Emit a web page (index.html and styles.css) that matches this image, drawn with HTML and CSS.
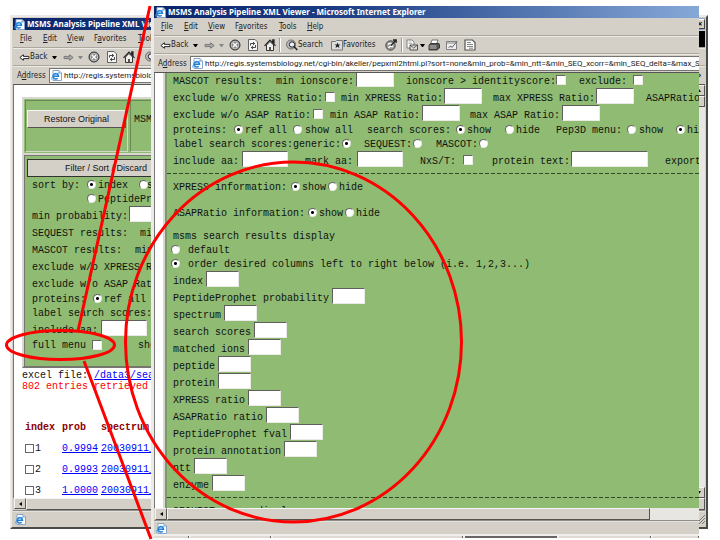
FILE: index.html
```html
<!DOCTYPE html>
<html lang="en">
<head>
<meta charset="utf-8">
<title>MSMS Analysis Pipeline XML Viewer</title>
<link rel="stylesheet" href="styles.css">
</head>
<body>
<svg class="defs" aria-hidden="true">
  <symbol id="ie" viewBox="0 0 11 11"><path d="M2 .5h6l2.500 2.500v7.500H2z" fill="#fff" stroke="#8aa4c8"/><path d="M8 .5V3h2.500" fill="#d8e6f8" stroke="#5b7cb0" stroke-width=".6"/><path d="M2.200 6.200h5.300a2.700 2.700 0 1 0-.8 2" fill="none" stroke="#1e7fd6" stroke-width="1.500"/><path d="M.6 9.500C0 7 4 3.200 8.300 3.200" fill="none" stroke="#3aa0ee" stroke-width=".8"/></symbol>
  <symbol id="back" viewBox="0 0 10 10"><path d="M4 2.500.8 5 4 7.500V6h5V4H4z" fill="#fff" stroke="#222" stroke-width=".9"/></symbol>
  <symbol id="fwd" viewBox="0 0 10 10"><path d="M6 2.500 9.200 5 6 7.500V6H1V4h5z" fill="#aaa" stroke="#777" stroke-width=".9"/></symbol>
  <symbol id="stop" viewBox="0 0 12 12"><circle cx="6" cy="6" r="5" fill="#8c8c8c" stroke="#333"/><circle cx="6" cy="6" r="3.700" fill="none" stroke="#ddd" stroke-width=".6"/><path d="m4 4 4 4m0-4L4 8" stroke="#fff" stroke-width="1.300"/></symbol>
  <symbol id="refresh" viewBox="0 0 12 12"><path d="M1.500.5h6.500l2.500 2.500v8.500h-9z" fill="#f5f5f5" stroke="#555" stroke-width=".9"/><path d="M3.500 6.500V4.500h4M6 3l1.700 1.500L6 6M8.500 6v2.500h-4M6 7 4.300 8.500 6 10" fill="none" stroke="#333" stroke-width=".9"/></symbol>
  <symbol id="home" viewBox="0 0 12 12"><path d="M2.500 6v5.500h7V6L6 2.500z" fill="#eee" stroke="#333"/><path d="M.5 6.800 6 1.200l5.500 5.600M8.800 3.500V.8H10v4" fill="none" stroke="#222" stroke-width="1.200"/><path d="M5 8h2v3.500H5z" fill="#555"/></symbol>
  <symbol id="search" viewBox="0 0 12 12"><circle cx="5" cy="5.500" r="4.500" fill="#bbb" stroke="#555" stroke-width=".8"/><circle cx="6" cy="5.500" r="2.700" fill="#eef" stroke="#222"/><path d="m8 7.500 3.300 3.500" stroke="#222" stroke-width="1.600"/></symbol>
  <symbol id="fav" viewBox="0 0 12 12"><path d="M.5 2.500h4l1-1h6v9.500H.5z" fill="#ddd" stroke="#777"/><path d="m6.500 3.500.8 2h2.200L7.800 6.800l.7 2.200-2-1.300-2 1.300.7-2.200-1.700-1.300h2.200z" fill="#222"/></symbol>
  <symbol id="history" viewBox="0 0 12 12"><circle cx="5.500" cy="6.500" r="4.700" fill="#999" stroke="#444"/><path d="M3 5.500c2-2 4-1 5 1M3.500 9c1-2 3-2 4.500-1" fill="none" stroke="#fff" stroke-width="1.200"/><path d="m6 6.500 5-5.500M8 1h3.200v3" fill="none" stroke="#222" stroke-width="1.300"/></symbol>
  <symbol id="mail" viewBox="0 0 12 12"><path d="M1 1h5l2 2v6H1z" fill="#fff" stroke="#666" stroke-width=".8"/><path d="M2.500 3h3M2.500 4.500h4" stroke="#999" stroke-width=".7"/><path d="M4 6h7.500v5H4z" fill="#ddd" stroke="#444" stroke-width=".9"/><path d="m4 6 3.700 3 3.800-3" fill="none" stroke="#444" stroke-width=".8"/></symbol>
  <symbol id="print" viewBox="0 0 12 12"><path d="M4 1h6L8.500 5h-6z" fill="#fff" stroke="#555" stroke-width=".8"/><path d="M1 6 3 4.500h8L11.500 6v3L9 11H1z" fill="#555" stroke="#222" stroke-width=".8"/><path d="M1.500 7h7M1.500 9h7" stroke="#ddd" stroke-width=".8"/></symbol>
  <symbol id="edit" viewBox="0 0 12 12"><path d="M.5 2.500h10v8H.5z" fill="#eee" stroke="#777" stroke-width=".9"/><path d="M1 4h9" stroke="#888"/><path d="M2.500 8.500 5 7l1 1.500L11.300 2" fill="none" stroke="#666"/></symbol>
  <symbol id="notes" viewBox="0 0 12 12"><path d="M1 1h7.500L11 3.500V11H1z" fill="#fafafa" stroke="#555" stroke-width="1.200"/><path d="M3 3.500h4M3 5.500h6M3 7.500h6M5 9.200h4" stroke="#777" stroke-width=".9"/></symbol>
</svg>
<main class="desktop">

<section class="window window-back" aria-label="Compact menu view">
  <header class="titlebar"><svg class="icon"><use href="#ie"/></svg><span>MSMS Analysis Pipeline XML Viewer</span><button class="close" aria-label="Close">×</button></header>
  <nav class="menubar"><button><u>F</u>ile</button><button><u>E</u>dit</button><button><u>V</u>iew</button><button>F<u>a</u>vorites</button><button><u>T</u>ools</button><i class="throbber"></i></nav>
  <div class="toolbar"><button class="tool"><svg class="icon"><use href="#back"/></svg>Back</button><i class="drop"></i><svg class="icon"><use href="#fwd"/></svg><i class="drop dim"></i><svg class="icon big"><use href="#stop"/></svg><svg class="icon big"><use href="#refresh"/></svg><svg class="icon big"><use href="#home"/></svg><i></i><svg class="icon big"><use href="#search"/></svg></div>
  <div class="address"><label for="url-back">A<u>d</u>dress</label><div class="urlbox"><svg class="icon"><use href="#ie"/></svg><input id="url-back" value="http://regis.systemsbiology.net"></div><span class="more">»</span></div>
  <div class="viewport">
    <div class="page">
      <div class="panel panel-back">
        <div class="panel-top"><div class="cell"><button class="push">Restore Original</button></div><div class="cell msms">MSMS</div></div>
        <form class="filter">
          <button type="button" class="push filter-button">Filter / Sort / Discard</button>
          <div class="row radios b-sort"><span>sort by:</span><input type="radio" name="sort" id="s1" checked><label for="s1">index</label><input type="radio" name="sort" id="s2"><label for="s2">spectrum</label></div>
          <div class="row radios b-pep"><input type="radio" name="sort" id="s3"><label for="s3">PeptideProphet</label></div>
          <div class="row b-prob"><label for="bp">min probability:</label><input type="text" id="bp"></div>
          <div class="row b-seq"><span>SEQUEST results:</span><span>min</span></div>
          <div class="row b-mas"><span>MASCOT results:</span><span>min</span></div>
          <div class="row"><span>exclude w/o XPRESS Ratio:</span></div>
          <div class="row"><span>exclude w/o ASAP Ratio:</span></div>
          <div class="row radios b-prot"><span>proteins:</span><input type="radio" name="bprot" id="b1" checked><label for="b1">ref all</label></div>
          <div class="row radios tall"><span>label search scores:</span></div>
          <div class="row b-aa"><label for="baa">include aa:</label><input type="text" id="baa"></div>
          <div class="row b-full"><label for="full">full menu</label><input type="checkbox" id="full"><span>show</span></div>
        </form>
      </div>
      <p class="note">excel file: <a href="#x">/data3/search</a></p>
      <p class="note red">802 entries retrieved from</p>
      <table class="results">
        <thead><tr><th class="c-index">index</th><th class="c-prob">prob</th><th>spectrum</th></tr></thead>
        <tbody>
          <tr><td><label><input type="checkbox">1</label></td><td><a href="#a">0.9994</a></td><td><a href="#b">20030911_</a></td></tr>
          <tr><td><label><input type="checkbox">2</label></td><td><a href="#a">0.9993</a></td><td><a href="#b">20030911_</a></td></tr>
          <tr><td><label><input type="checkbox">3</label></td><td><a href="#a">1.0000</a></td><td><a href="#b">20030911_</a></td></tr>
        </tbody>
      </table>
    </div>
    <div class="vscroll"><i class="sbtn up"></i><i class="sbtn"></i><i class="track"></i><i class="sbtn down"></i></div>
  </div>
  <div class="hscroll"><i class="sbtn left"></i><i class="thumb"></i></div>
  <footer class="status"><svg class="icon"><use href="#ie"/></svg><svg class="grip" viewBox="0 0 9 9"><path d="M0 9 9 0M3 9l6-6M6 9l3-3" stroke="#777"/></svg></footer>
</section>

<section class="window window-front" aria-label="Full menu view">
  <header class="titlebar"><svg class="icon"><use href="#ie"/></svg><span>MSMS Analysis Pipeline XML Viewer - Microsoft Internet Explorer</span></header>
  <nav class="menubar"><button><u>F</u>ile</button><button><u>E</u>dit</button><button><u>V</u>iew</button><button>F<u>a</u>vorites</button><button><u>T</u>ools</button><button><u>H</u>elp</button></nav>
  <div class="toolbar"><button class="tool"><svg class="icon"><use href="#back"/></svg>Back</button><i class="drop"></i><svg class="icon"><use href="#fwd"/></svg><i class="drop dim"></i><svg class="icon big"><use href="#stop"/></svg><svg class="icon big"><use href="#refresh"/></svg><svg class="icon big"><use href="#home"/></svg><i class="sep"></i><button class="tool"><svg class="icon big"><use href="#search"/></svg>Search</button><button class="tool"><svg class="icon big"><use href="#fav"/></svg>Favorites</button><svg class="icon big"><use href="#history"/></svg><i class="sep"></i><svg class="icon big"><use href="#mail"/></svg><i class="drop"></i><svg class="icon big"><use href="#print"/></svg><svg class="icon big"><use href="#edit"/></svg><svg class="icon big"><use href="#notes"/></svg></div>
  <div class="address"><label for="url-front">A<u>d</u>dress</label><div class="urlbox"><svg class="icon"><use href="#ie"/></svg><input id="url-front" value="http://regis.systemsbiology.net/cgi-bin/akeller/pepxml2html.pl?sort=none&amp;min_prob=&amp;min_ntt=&amp;min_SEQ_xcorr=&amp;min_SEQ_delta=&amp;max_SEQ"></div></div>
  <div class="viewport">
    <form class="panel panel-front">
      <div class="row r1"><span>MASCOT results:</span><label for="f1">min ionscore:</label><input type="text" id="f1"><label for="f2">ionscore &gt; identityscore:</label><input type="checkbox" id="f2"><label for="f3">exclude:</label><input type="checkbox" id="f3"></div>
      <div class="row r2"><label for="f4">exclude w/o XPRESS Ratio:</label><input type="checkbox" id="f4"><label for="f5">min XPRESS Ratio:</label><input type="text" id="f5"><label for="f6">max XPRESS Ratio:</label><input type="text" id="f6"><span>ASAPRatio</span></div>
      <div class="row r3"><label for="f7">exclude w/o ASAP Ratio:</label><input type="checkbox" id="f7"><label for="f8">min ASAP Ratio:</label><input type="text" id="f8"><label for="f9">max ASAP Ratio:</label><input type="text" id="f9"></div>
      <div class="row radios r4"><span>proteins:</span><input type="radio" name="prot" id="p1" checked><label for="p1">ref all</label><input type="radio" name="prot" id="p2"><label for="p2">show all</label><span>search scores:</span><input type="radio" name="sc" id="p3" checked><label for="p3">show</label><input type="radio" name="sc" id="p4"><label for="p4">hide</label><span>Pep3D menu:</span><input type="radio" name="pep" id="p5"><label for="p5">show</label><input type="radio" name="pep" id="p6" checked><label for="p6">hide</label></div>
      <div class="row radios tall r5"><span>label search scores:</span><label for="g1">generic:</label><input type="radio" name="lab" id="g1" checked><label for="g2">SEQUEST:</label><input type="radio" name="lab" id="g2"><label for="g3">MASCOT:</label><input type="radio" name="lab" id="g3"></div>
      <div class="row r6"><label for="h1">include aa:</label><input type="text" id="h1"><label for="h2">mark aa:</label><input type="text" id="h2"><label for="h3">NxS/T:</label><input type="checkbox" id="h3"><label for="h4">protein text:</label><input type="text" id="h4"><span>export</span></div>
      <hr>
      <div class="row radios info info-x"><span>XPRESS information:</span><input type="radio" name="xi" id="x1" checked><label for="x1">show</label><input type="radio" name="xi" id="x2"><label for="x2">hide</label></div>
      <div class="row radios info info-a"><span>ASAPRatio information:</span><input type="radio" name="ai" id="a1" checked><label for="a1">show</label><input type="radio" name="ai" id="a2"><label for="a2">hide</label></div>
      <div class="row radios"><span>msms search results display</span></div>
      <div class="row radios choice"><input type="radio" name="disp" id="d1"><label for="d1">default</label></div>
      <div class="row radios choice tall"><input type="radio" name="disp" id="d2" checked><label for="d2">order desired columns left to right below (i.e. 1,2,3...)</label></div>
      <div class="row field"><label for="o1">index</label><input type="text" id="o1"></div>
      <div class="row field"><label for="o2">PeptideProphet probability</label><input type="text" id="o2"></div>
      <div class="row field"><label for="o3">spectrum</label><input type="text" id="o3"></div>
      <div class="row field"><label for="o4">search scores</label><input type="text" id="o4"></div>
      <div class="row field"><label for="o5">matched ions</label><input type="text" id="o5"></div>
      <div class="row field"><label for="o6">peptide</label><input type="text" id="o6"></div>
      <div class="row field"><label for="o7">protein</label><input type="text" id="o7"></div>
      <div class="row field"><label for="o8">XPRESS ratio</label><input type="text" id="o8"></div>
      <div class="row field"><label for="o9">ASAPRatio ratio</label><input type="text" id="o9"></div>
      <div class="row field"><label for="o10">PeptideProphet fval</label><input type="text" id="o10"></div>
      <div class="row field"><label for="o11">protein annotation</label><input type="text" id="o11"></div>
      <div class="row field"><label for="o12">ntt</label><input type="text" id="o12"></div>
      <div class="row field"><label for="o13">enzyme</label><input type="text" id="o13"></div>
      <hr>
      <div class="row radios"><span>SEQUEST score display</span></div>
    </form>
  </div>
  <div class="hscroll"><i class="sbtn left"></i><i class="thumb"></i><i class="track"></i></div>
  <footer class="status"><svg class="icon"><use href="#ie"/></svg></footer>
  <div class="taskbar"><i></i><i></i><i></i><i class="active"></i><i></i><i></i></div>
</section>

<svg class="callout" viewBox="0 0 720 540" preserveAspectRatio="none" aria-hidden="true">
  <ellipse cx="293.500" cy="342" rx="168" ry="180"/>
  <ellipse cx="60.500" cy="345" rx="54" ry="14.500"/>
  <path d="M150 6 78 331M84 361l67 178"/>
</svg>
</main>
</body>
</html>
```
FILE: styles.css
```css
* { box-sizing: border-box; }

:root {
  --face: #d4d0c8;
  --light: #eceae6;
  --shadow: #77756f;
  --green: #8fbc72;
}

html, body { height: 100%; margin: 0; }
body { background: #fff; overflow: hidden; }
.defs { position: absolute; width: 0; height: 0; }
.desktop { position: relative; height: 100%; }

button, input { font: inherit; color: inherit; margin: 0; padding: 0; }
button { border: 0; background: none; }

.window {
  position: absolute;
  display: flex;
  flex-direction: column;
  background: var(--face);
  font: 8px/12px "DejaVu Sans Condensed", "DejaVu Sans", sans-serif;
  color: #222;
  overflow: hidden;
}
.window-back {
  left: 10px; right: 12px; top: 15px; bottom: 11px;
  border: 2px solid var(--light);
  border-right-color: #4a4a48;
  border-bottom-color: #4a4a48;
  box-shadow: inset 1px 1px 0 var(--face);
  padding: 1px;
}
.window-front {
  left: 151px; right: 21px; top: 6px; bottom: 2px;
  border-left: 3px solid var(--light);
}

.icon { width: 11px; height: 11px; flex: none; display: block; }
.icon.big { width: 12px; height: 12px; }

.titlebar {
  display: flex;
  align-items: center;
  gap: 2px;
  height: 12px;
  flex: none;
  padding-left: 1px;
  background: linear-gradient(90deg, #0a246a, #1d3f85 35%, #86a8d8);
  color: #fff;
  font-family: "Noto Sans", sans-serif;
  font-weight: bold;
  white-space: nowrap;
}
.close {
  margin-left: auto;
  width: 10px; height: 10px;
  line-height: 8px;
  background: var(--face);
  color: #000;
  border: 1px solid #fff;
  border-right-color: #444; border-bottom-color: #444;
}

.menubar {
  display: grid;
  grid-template-columns: 23px 24px 27px 44px 28px 1fr;
  align-items: center;
  height: 18px;
  flex: none;
  padding-left: 7px;
  border-bottom: 1px solid #aaa79f;
}
.menubar button { text-align: left; }
.throbber { justify-self: end; width: 16px; height: 16px; background: #000; }

.toolbar {
  display: grid;
  grid-template-columns: 33px 11px 15px 10px 18px 17px 15px 7px 45px 54px 16px 5px 14px 8px 18px 18px 14px;
  align-items: center;
  height: 18px;
  flex: none;
  padding-left: 6px;
  border-top: 1px solid var(--light);
  border-bottom: 1px solid #aaa79f;
}
.tool { display: flex; align-items: center; white-space: nowrap; }
.drop { border: 2px solid transparent; border-top: 3px solid #000; border-bottom: 0; width: 5px; }
.drop.dim { border-top-color: #888; }
.sep { width: 2px; height: 14px; border-left: 1px solid #999; border-right: 1px solid #fff; }

.address { display: flex; align-items: center; height: 18px; flex: none; padding-left: 4px; border-top: 1px solid var(--light); }
.address label { width: 32px; flex: none; }
.urlbox {
  display: flex;
  align-items: center;
  gap: 2px;
  flex: 1;
  min-width: 0;
  height: 15px;
  padding-left: 1px;
  background: #fff;
  border: 1px solid var(--shadow);
  border-right: 0;
}
.urlbox input { flex: 1; min-width: 0; height: 12px; border: 0; background: none; outline: 0; font-family: Roboto, "Liberation Sans", sans-serif; }
.more { width: 12px; font-weight: bold; text-align: center; }

.viewport {
  display: flex;
  flex: 1;
  min-height: 0;
  background: #fff;
  border-top: 1px solid #555;
  border-left: 1px solid #777;
  overflow: hidden;
  font: 10px/20px "Liberation Mono", monospace;
  color: #111;
}
.page { flex: 1; min-width: 0; padding: 12px 0 0 8px; overflow: hidden; }

.panel { background: var(--green); }
.panel-front {
  flex: 1;
  min-width: 0;
  height: max-content;
  margin: -2px 0 0 8px;
  padding-left: 8px;
  border-left: 2px solid #d9d7d2;
  box-shadow: inset 2px 0 0 #7c9a68;
}
.panel-back { border: 2px solid #d9d7d2; border-right: 0; border-bottom-color: var(--shadow); }
.panel-top { display: grid; grid-template-columns: 105px 1fr; height: 56px; border-bottom: 2px solid #d9d7d2; }
.cell { border: 1px solid #6c8758; border-right-color: #cfd8c6; border-bottom-color: #cfd8c6; margin: 1px; padding: 9px 1px; }
.cell.msms { padding-left: 3px; }
.push {
  display: block;
  width: 100%;
  height: 18px;
  background: var(--face);
  border: 1px solid #f4f4f4;
  border-right-color: #55534e;
  border-bottom-color: #55534e;
  font: 9px/14px "Liberation Sans", sans-serif;
}
.filter { padding: 3px 0 12px 2px; border-top: 1px solid var(--shadow); border-left: 1px solid var(--shadow); }
.filter-button { border: 1px solid #333; text-align: left; padding-left: 37px; }
.filter .row { margin-left: 5px; }

/* A form line: children sit on the column grid that each line declares. */
.row { display: grid; align-items: start; justify-content: start; height: 17px; white-space: nowrap; line-height: 22px; }
.row.radios { height: 14px; line-height: 18px; }
.row.radios.tall { height: 15px; }

input[type="text"] {
  appearance: none;
  width: 38px;
  height: 16px;
  background: #fff;
  border: 1px solid var(--light);
  border-top-color: #5e5e5a;
  border-left-color: #5e5e5a;
  border-radius: 0;
  outline: 0;
}
input[type="checkbox"], input[type="radio"] {
  appearance: none;
  display: block;
  width: 9px;
  height: 9px;
  margin-top: 4px;
  background: #fff;
  border: 1px solid var(--light);
  border-top-color: #666;
  border-left-color: #666;
}
input[type="checkbox"] { width: 10px; height: 10px; }
input[type="radio"] { border-radius: 50%; margin-top: 3px; }
input[type="radio"]:checked { background: radial-gradient(circle, #000 0 1px, #fff 2px); }

.r1 { grid-template-columns: 103px 80px 50px 150px 23px 54px 10px; }
.r2 { grid-template-columns: 152px 16px 103px 49px 103px 50px 60px; }
.r3 { grid-template-columns: 140px 17px 92px 48px 92px 38px; }
.r4 { grid-template-columns: 61px 11px 48px 12px 62px 89px 11px 38px 11px 40px 71px 12px 37px 11px 24px; }
.r5 { grid-template-columns: 120px 49px 22px 49px 23px 43px 10px; }
.r6 { grid-template-columns: 69px 63px 52px 63px 43px 29px 79px 94px 40px; }
.r6 input[type="text"] { width: 46px; }
.r6 #h4 { width: 77px; }
.info { margin-bottom: 12px; }
.info.info-a { margin-bottom: 9px; }
.info-x { grid-template-columns: 118px 11px 26px 11px 24px; }
.info-a { grid-template-columns: 135px 11px 26px 11px 24px; }
.choice { grid-template-columns: 17px 1fr; margin-left: -2px; }
.field { display: flex; gap: 3px; }
.field input[type="text"] { width: 33px; }

.b-sort { grid-template-columns: 55px 11px 41px 8px 48px; }
.b-pep { grid-template-columns: 11px 84px; padding-left: 55px; }
.row.b-pep { height: 15px; }
.b-prob { grid-template-columns: 97px 38px; }
.b-seq { grid-template-columns: 108px 20px; }
.b-mas { grid-template-columns: 103px 20px; }
.b-prot { grid-template-columns: 61px 11px 42px; }
.b-aa { grid-template-columns: 69px 46px; }
.b-aa input[type="text"] { width: 46px; }
.row.b-full { grid-template-columns: 60px 46px 24px; line-height: 18px; }
.b-full input[type="checkbox"] { margin-top: 3px; }

hr { height: 10px; margin: 0 0 1px -6px; border: 0; background: repeating-linear-gradient(90deg, #33452a 0 4px, transparent 4px 6px) 0 5px / 100% 1px no-repeat; }

.note { margin: 0; line-height: 11px; white-space: nowrap; }
.panel-back + .note { margin-top: 2px; }
.red { color: #f00; }
a { color: #00f; }

.results { margin-top: 25px; border-collapse: collapse; table-layout: fixed; width: 100%; line-height: 12px; }
.results th, .results td { height: 21px; padding: 0; text-align: left; }
.results th { color: #8b0000; }
.results th:first-child, .results td:first-child { padding-left: 3px; }
.c-index { width: 40px; }
.c-prob { width: 39px; }
.results label { display: flex; align-items: center; gap: 1px; }
.results input[type="checkbox"] { margin: 0; width: 9px; height: 9px; border-color: #666; }

.vscroll { display: flex; flex-direction: column; width: 12px; background: #e8e6e2; }
.track { flex: 1; background: #e8e6e2; }
.sbtn {
  display: grid;
  place-items: center;
  width: 12px;
  height: 11px;
  flex: none;
  background: var(--face);
  border: 1px solid #f4f4f4;
  border-right-color: #55534e;
  border-bottom-color: #55534e;
}
.sbtn::before { content: ""; border: 2px solid transparent; }
.sbtn.left::before { border-right: 3px solid #000; border-left: 0; }
.sbtn.up::before { border-bottom: 3px solid #000; border-top: 0; }
.sbtn.down::before { border-top: 3px solid #000; border-bottom: 0; }
.hscroll { display: flex; height: 12px; flex: none; padding-left: 1px; }
.window-front .sbtn { height: 12px; }
.thumb { flex: 1; border: 1px solid #f4f4f4; border-right: 1px solid #55534e; border-bottom: 1px solid #55534e; }
.window-front .thumb { flex: 0 1 483px; }

.status { display: flex; align-items: center; justify-content: space-between; height: 16px; flex: none; padding-left: 2px; border-top: 2px groove #e4e2dc; }
.window-front .status { height: 14px; }
.grip { width: 9px; height: 9px; }
.taskbar { display: grid; grid-template-columns: 35px 80px 190px 92px 92px 1fr; gap: 2px; height: 4px; flex: none; padding-top: 2px; background: #efeeea; }
.taskbar i { background: #dedbd4; border-right: 1px solid #666; }
.taskbar .active { background: #666; }

.callout { position: absolute; inset: 0; width: 100%; height: 100%; pointer-events: none; fill: none; stroke: #f00; stroke-width: 3; }
```
